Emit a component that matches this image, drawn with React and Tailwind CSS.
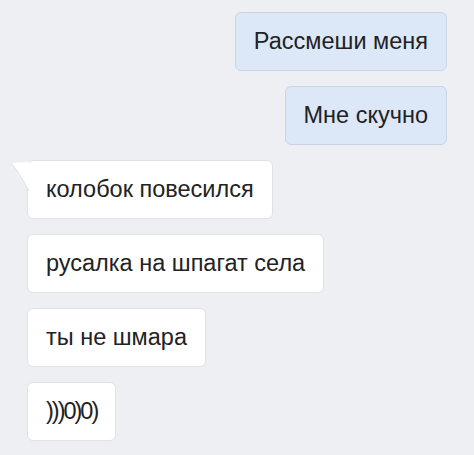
import React from 'react';

const mine = ['Рассмеши меня', 'Мне скучно'];
const theirs = ['колобок повесился', 'русалка на шпагат села', 'ты не шмара', ')))0)0)'];

const Bubble = ({ text, out, tail, tight }) => (
  <div
    className={`relative h-[59px] flex items-center px-[18px] rounded-[6px] border text-[23.5px] text-[#222] ${
      out ? 'bg-[#dce8f8] border-[#c9d4e4]' : 'bg-white border-[#dfe2e8]'
    }`}
  >
    {tail && (
      <svg className="absolute left-[-18px] top-[1px]" width="20" height="30" viewBox="0 0 20 30">
        <path d="M19 0 L1 1 Q9 10 19 29 Z" fill="#fff" />
        <path d="M1 1 Q9 10 19 29" fill="none" stroke="#dfe2e8" strokeWidth="1" />
      </svg>
    )}
    <span className={`leading-none ${tight ? 'tracking-[-2px]' : ''}`}>{text}</span>
  </div>
);

export default function App() {
  return (
    <div
      className="w-[474px] h-[455px] bg-[#edeff3] overflow-hidden pt-[12px] px-[27px] flex flex-col gap-[15px]"
      style={{ fontFamily: '"Liberation Sans", Arial, sans-serif' }}
    >
      {mine.map((t) => (
        <div key={t} className="flex justify-end">
          <Bubble text={t} out />
        </div>
      ))}
      {theirs.map((t, i) => (
        <div key={t} className="flex justify-start">
          <Bubble text={t} tail={i === 0} tight={i === 3} />
        </div>
      ))}
    </div>
  );
}
